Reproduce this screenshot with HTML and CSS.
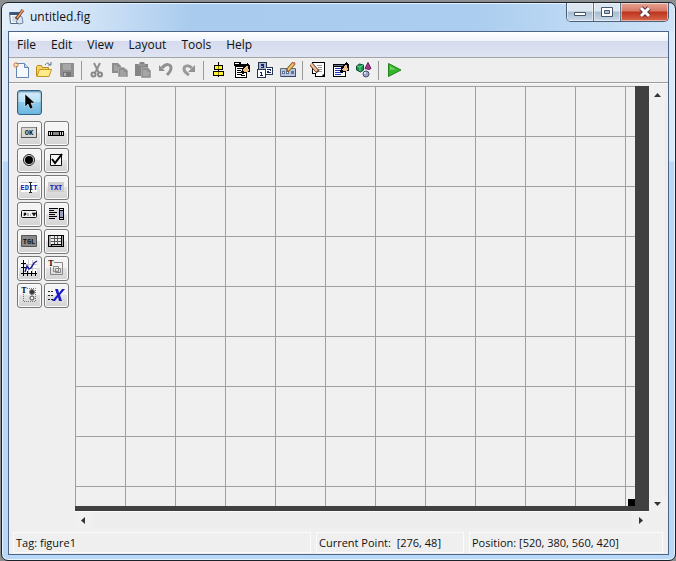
FILE: index.html
```html
<!DOCTYPE html>
<html lang="en">
<head>
<meta charset="utf-8">
<title>untitled.fig</title>
<link rel="stylesheet" href="styles.css">
</head>
<body>
<div class="window">
  <header class="titlebar">
    <svg class="app-icon" viewBox="0 0 16 16" aria-hidden="true">
      <path d="M.5 3.500h11v11H1.500z" fill="#f7fafc" stroke="#526b86"/>
      <path d="M1 3h10v3H1z" fill="#3d5878"/>
      <path d="M3 8h5M3 10h4M3 12h6" stroke="#b4c2d0"/>
      <path d="M11 7l2 1 1 6-4 1-3-2z" fill="#dce5ee" stroke="#70849a"/>
      <path d="M14 1L7 10" stroke="#643c2c" stroke-width="3"/>
      <path d="M14 1L8 9" stroke="#eda062" stroke-width="1.500"/>
    </svg>
    <h1 class="title">untitled.fig</h1>
    <div class="controls">
      <button class="control minimize" aria-label="Minimize"><svg viewBox="0 0 14 12"><path d="M1.500 6.500h11v3h-11z" fill="#fff" stroke="#47566d"/></svg></button>
      <button class="control maximize" aria-label="Maximize"><svg viewBox="0 0 14 12"><path d="M1.500 1.500h11v9h-11z" fill="#fff" stroke="#47566d"/><path d="M4.500 4.500h5v3h-5z" fill="#aebfd2" stroke="#47566d"/></svg></button>
      <button class="control close" aria-label="Close"><svg viewBox="0 0 14 12"><path d="M3 2l8 8M11 2l-8 8" stroke="#5d3440" stroke-width="5"/><path d="M3 2l8 8M11 2l-8 8" stroke="#fff" stroke-width="3"/></svg></button>
    </div>
  </header>

  <main class="client">
    <nav class="menubar" aria-label="Main menu">
      <button class="menu">File</button>
      <button class="menu">Edit</button>
      <button class="menu">View</button>
      <button class="menu">Layout</button>
      <button class="menu">Tools</button>
      <button class="menu">Help</button>
    </nav>

    <div class="toolbar" role="toolbar" aria-label="Standard">
      <button class="tool" aria-label="New"><svg viewBox="0 0 16 16"><path d="M3.500 1.500h8l4 4v10h-12z" fill="#f4f9ff" stroke="#6384b0"/><path d="M11.500 1.500v4h4" fill="#c6daf0" stroke="#6384b0"/><path d="M3 0v6M0 3h6M1 1l4 4M5 1L1 5" stroke="#d9743a"/><path d="M2 2h2v2H2z" fill="#ffe9a8"/></svg></button>
      <button class="tool" aria-label="Open"><svg viewBox="0 0 16 16"><path d="M.5 14V4.500l1-1h4l1 2h6V8" fill="#f4d266" stroke="#b98a1c"/><path d="M.8 14.500L3.500 7.500h12l-2.500 7z" fill="#ffeb8a" stroke="#c4941f"/><path d="M9 3c2-3 4-2 5 0" fill="none" stroke="#5c6f8a"/><path d="M12 3h3V0" fill="none" stroke="#5c6f8a"/></svg></button>
      <button class="tool" aria-label="Save" disabled><svg viewBox="0 0 16 16"><path d="M1 1h14v14H2l-1-1z" fill="#8f8f8f"/><path d="M4 2h8v6H4z" fill="#a8a8a8"/><path d="M4 10h8v5H4z" fill="#757575"/><path d="M5 11h2v3H5z" fill="#b5b5b5"/></svg></button>
      <span class="separator"></span>
      <button class="tool" aria-label="Cut" disabled><svg viewBox="0 0 16 16"><path d="M5 1l5 10M11 1L6 11" stroke="#909090" stroke-width="2"/><circle cx="4.500" cy="12.500" r="2" fill="none" stroke="#888" stroke-width="2"/><circle cx="11" cy="12.500" r="2" fill="none" stroke="#888" stroke-width="2"/></svg></button>
      <button class="tool" aria-label="Copy" disabled><svg viewBox="0 0 16 16"><path d="M0 1h6l3 3v7H0z" fill="#8d8d8d"/><path d="M2 4h3M2 6h4M2 8h4" stroke="#b8b8b8"/><path d="M6.500 5.500h5l4 3v6h-9z" fill="#8d8d8d" stroke="#aaa"/><path d="M8 9h4M8 11h6M8 13h6" stroke="#b8b8b8"/></svg></button>
      <button class="tool" aria-label="Paste" disabled><svg viewBox="0 0 16 16"><path d="M0 2h4l1-2h4l1 2h3v12H0z" fill="#858585"/><path d="M3 3h7" stroke="#aaa"/><path d="M6.500 5.500h6l3 3v7h-9z" fill="#929292" stroke="#a5a5a5"/><path d="M8 9h4M8 11h6M8 13h6" stroke="#b9b9b9"/></svg></button>
      <button class="tool" aria-label="Undo" disabled><svg viewBox="0 0 16 16"><path d="M4 6c4-5 9-4 9 0 0 3-2 5-4 7" fill="none" stroke="#919191" stroke-width="3"/><path d="M1 3v6h6z" fill="#919191"/></svg></button>
      <button class="tool" aria-label="Redo" disabled><svg viewBox="0 0 16 16"><path d="M11 6c-3-3-8-3-8 1 0 3 2 4 5 6" fill="none" stroke="#9a9a9a" stroke-width="3"/><path d="M14 3v7H7z" fill="#929292"/></svg></button>
      <span class="separator"></span>
      <button class="tool" aria-label="Align Objects"><svg class="crisp" viewBox="0 0 16 16"><path d="M7 0h1v15H7z"/><path d="M3 3h9v5H3zM2 9h11v5H2z"/><path d="M4 4h7v3H4zM3 10h9v3H3z" fill="#fff12a"/><path d="M7 4h1v3H7zM7 10h1v3H7z" fill="#8d8400"/></svg></button>
      <button class="tool" aria-label="Menu Editor"><svg class="crisp" viewBox="0 0 16 16"><path d="M0 0h7v2h6v14H1V4H0z"/><path d="M2 5h10v10H2z" fill="#fff"/><path d="M1 1h4v1H1z" fill="#fff"/><path d="M3 6h5v1H3zM3 8h4v1H3zM3 10h4v1H3zM3 12h5v1H3zM7 14h4v-1H7z"/><path d="M7 11l2-6 4-4 3 3v6h-3l-4 2z"/><path d="M9 8l4-5 1 2-4 5zM10 10l4-5 1 4-3 1z" fill="#e9bd84"/></svg></button>
      <button class="tool" aria-label="Tab Order Editor"><svg class="crisp" viewBox="0 0 16 16"><path d="M1 0h9v7H1zM0 7h9v9H0zM8 5h8v8H8z" fill="#26364c"/><path d="M2 1h7v6H2z" fill="#aab5d2"/><path d="M1 8h7v7H1zM9 6h6v6H9z" fill="#fff"/><path d="M4 2h3v4H4V5h2V4H4zM3 10h2v3h1v1H3v-1h1v-2H3zM10 7h4v2h-2v1h2v1h-4V9h3V8h-3z" fill="#18206f"/></svg></button>
      <button class="tool" aria-label="Toolbar Editor"><svg viewBox="0 0 16 16"><path d="M.5 6.500h15v8H.5z" fill="#b9c5dc" stroke="#5f6c83"/><path d="M1 14.500h15V7" fill="none" stroke="#33435d"/><path d="M2 9h3v3H2zM6 9h3v3H6zM11 9h3v3h-3z" fill="#61759a"/><path d="M3 10h1v1H3zM7 10h1v1H7z" fill="#fff"/><path d="M14 1L7 9" stroke="#805722" stroke-width="4"/><path d="M14 1L8 8" stroke="#f5c765" stroke-width="2"/><path d="M13 0l2 2" stroke="#d96858" stroke-width="2"/></svg></button>
      <span class="separator"></span>
      <button class="tool" aria-label="Editor"><svg viewBox="0 0 16 16"><path d="M2 0h13v15H5v-3H2z" fill="#000"/><path d="M3 1h11v11h-2v2H6v-3H3z" fill="#fff"/><path d="M7 3.500h5M8 5.500h4M8 7.500h4M7 9.500h5" stroke="#999"/><path d="M12 14v-2h2z" fill="#ccc"/><path d="M1 2l7 8" stroke="#5b3824" stroke-width="4"/><path d="M1 2l6 7" stroke="#f3c09a" stroke-width="2.500"/></svg></button>
      <button class="tool" aria-label="Property Inspector"><svg class="crisp" viewBox="0 0 16 16"><path d="M0 2h13v13H0z"/><path d="M1 5h11v9H1z" fill="#fff"/><path d="M1 3h11v1H1z" fill="#62769d"/><path d="M2 6h6v1H2zM2 8h5v1H2zM2 10h6v1H2zM2 12h6v1H2z" fill="#2433ae"/><path d="M7 10l2-6 4-4 3 3v6h-3l-4 2z"/><path d="M9 8l4-6 1 2-4 5zM10 9l4-5 1 4-3 1z" fill="#e9bd84"/></svg></button>
      <button class="tool" aria-label="Object Browser"><svg viewBox="0 0 16 16"><path d="M.5 4l3-2 4 1v5l-3 2-4-2z" fill="#199552" stroke="#124d31"/><path d="M1 4l3 1v4M4 5l3-2" fill="none" stroke="#72d494"/><path d="M12 .5l3 6-2 1-4-1z" fill="#a83391" stroke="#662258"/><circle cx="10" cy="12" r="3" fill="#9aa5c9" stroke="#49506d"/><circle cx="9" cy="11" r="1" fill="#eef"/></svg></button>
      <span class="separator"></span>
      <button class="tool" aria-label="Run Figure"><svg viewBox="0 0 16 16"><path d="M2.500 1.500L15 8 2.500 14.500z" fill="#35b52c" stroke="#24831f"/><path d="M4 4l6 3.500L4 8z" fill="#67d35c"/></svg></button>
    </div>

    <div class="workspace">
      <aside class="palette" aria-label="Component palette">
        <button class="component selected" aria-label="Select"><svg viewBox="0 0 18 18"><path d="M5 1v13l3-3 2 5 3-1-2-5h4z" fill="#000" stroke="#fff" stroke-opacity=".5"/></svg></button>
        <div class="components">
          <button class="component" aria-label="Push Button"><svg viewBox="0 0 18 18"><path d="M1.500 3.500h15v10h-15z" fill="#d8d8d0" stroke="#888"/><path d="M1 13.500h15.500V3" fill="none" stroke="#555"/><text class="glyph" x="9" y="11">OK</text></svg></button>
          <button class="component" aria-label="Slider"><svg class="crisp" viewBox="0 0 18 18"><path d="M1 7h16v5H1z"/><path d="M2 8h1v3H2zM4 8h1v3H4zM13 8h1v3h-1zM15 8h1v3h-1z" fill="#ddd"/><path d="M6 8h6v3H6z" fill="#888"/></svg></button>
          <button class="component" aria-label="Radio Button"><svg viewBox="0 0 18 18"><circle cx="9" cy="9" r="5.500" fill="#ddd" stroke="#222"/><circle cx="9" cy="9" r="4" fill="#000"/></svg></button>
          <button class="component" aria-label="Check Box"><svg viewBox="0 0 18 18"><path d="M3.500 3.500h11v11h-11z" fill="#f6f6f6" stroke="#111"/><path d="M5 8l3 4 7-9" fill="none" stroke="#000" stroke-width="2"/></svg></button>
          <button class="component" aria-label="Edit Text"><svg viewBox="0 0 18 18"><path d="M1 4h16v10H1z" fill="#fff"/><path d="M1 4.500h16" stroke="#ccc"/><text class="glyph blue" x="9" y="12">EDIT</text><path d="M10.500 5v9M9 4.500h3M9 14.500h3" stroke="#222"/></svg></button>
          <button class="component" aria-label="Static Text"><svg viewBox="0 0 18 18"><path d="M1 4h16v10H1z" fill="#cdcdd0"/><text class="glyph blue" x="9" y="12">TXT</text></svg></button>
          <button class="component" aria-label="Pop-up Menu"><svg viewBox="0 0 18 18"><rect x="1.500" y="5.500" width="15" height="7" rx="1" fill="#f4f4f4" stroke="#111"/><path d="M4 11V8h2v2M8 8v3M10 10h1M12 8h4l-2 3z" fill="#111" stroke="#111" stroke-width=".6"/></svg></button>
          <button class="component" aria-label="Listbox"><svg class="crisp" viewBox="0 0 18 18"><path d="M2 3h15v12H2z" fill="#dadada"/><path d="M2 3h9v1H2zM2 5h5v1H2zM2 7h8v1H2zM2 9h6v1H2zM2 11h8v1H2zM2 13h6v1H2zM12 3h5v12h-5z"/><path d="M13 4h3v1h-3zM13 13h3v1h-3z" fill="#ddd"/><path d="M13 6h3v6h-3z" fill="#9aa0bd"/></svg></button>
          <button class="component" aria-label="Toggle Button"><svg viewBox="0 0 18 18"><path d="M1.500 3.500h15v11h-15z" fill="#888" stroke="#555"/><text class="glyph" x="9" y="12">TGL</text></svg></button>
          <button class="component" aria-label="Table"><svg class="crisp" viewBox="0 0 18 18"><path d="M1 3h16v12H1z"/><path d="M2 4h2v10H2zM15 4h1v10h-1zM5 13h9v1H5z" fill="#aaa"/><path d="M4 4h10v8H4z" fill="#555"/><path d="M4 4h3v2H4zM8 4h2v2H8zM11 4h3v2h-3zM4 7h3v2H4zM8 7h2v2H8zM11 7h3v2h-3zM4 10h3v2H4zM8 10h2v2H8zM11 10h3v2h-3z" fill="#eee"/></svg></button>
          <button class="component" aria-label="Axes"><svg viewBox="0 0 18 18"><path d="M4 1h13v13H4z" fill="#fff"/><path d="M4 5.500h13M4 9.500h13M8.500 1v13M12.500 1v13" stroke="#ccc"/><path d="M3.500 1v16M1 14.500h16M1 4.500h5M1 8.500h5M7.500 12v5M11.500 12v5M15.500 12v5" stroke="#000"/><path d="M5 13l2-6 2 3 2-1 3-5 3-2" fill="none" stroke="#20209c" stroke-width="1.500"/></svg></button>
          <button class="component" aria-label="Panel"><svg viewBox="0 0 18 18"><path d="M7 3.500h8.500v12h-12V8" fill="none" stroke="#888"/><path d="M6.500 7.500h5v5h-5zM8.500 9.500h5v4h-5z" fill="none" stroke="#888"/><text class="serif" x="4" y="7">T</text></svg></button>
          <button class="component" aria-label="Button Group"><svg viewBox="0 0 18 18"><path d="M7 2.500h8.500v13h-12V8" fill="none" stroke="#777" stroke-dasharray="1"/><circle cx="12" cy="6" r="2.500" fill="#333" stroke="#777"/><circle cx="12" cy="12" r="2" fill="#f4f4f4" stroke="#444"/><text class="serif" x="4" y="7">T</text></svg></button>
          <button class="component" aria-label="ActiveX Control"><svg viewBox="0 0 18 18"><path d="M1 5.500h6M1 9.500h6M1 13.500h5" stroke="#222" stroke-dasharray="2 1"/><path d="M8 3h3l1 4 3-4h3l-5 6 2 6h-3l-1-4-3 4H5l5-6z" fill="#1a1ac9"/></svg></button>
        </div>
      </aside>

      <section class="editor" aria-label="Layout area">
        <div class="canvas"><div class="grid"><span class="handle"></span></div></div>
        <div class="scroll vertical">
          <button class="arrow" aria-label="Scroll up"><svg viewBox="0 0 9 9"><path d="M1 7l3.500-4L8 7z"/></svg></button>
          <button class="arrow" aria-label="Scroll down"><svg viewBox="0 0 9 9"><path d="M1 3h7L4.500 7z"/></svg></button>
        </div>
        <div class="scroll horizontal">
          <button class="arrow" aria-label="Scroll left"><svg viewBox="0 0 9 9"><path d="M6 1v7L2 4.500z"/></svg></button>
          <button class="arrow" aria-label="Scroll right"><svg viewBox="0 0 9 9"><path d="M3 1v7l4-3.500z"/></svg></button>
        </div>
      </section>
    </div>

    <footer class="statusbar">
      <div class="status">Tag: figure1</div>
      <div class="status">Current Point:&nbsp; [276, 48]</div>
      <div class="status">Position: [520, 380, 560, 420]</div>
    </footer>
  </main>
</div>
</body>
</html>
```

FILE: styles.css
```css
* { box-sizing: border-box; }

body {
  margin: 0;
  padding: 2px 0 0 1px;
  background: #8c8f92;
  color: #111;
  font: 12px/16px "Open Sans", "Noto Sans", sans-serif;
}

button {
  margin: 0;
  padding: 0;
  border: 0;
  background: none;
  color: inherit;
  font: inherit;
}

svg { display: block; fill: none; }
.crisp { shape-rendering: crispEdges; fill: #000; }

.window {
  display: flex;
  flex-direction: column;
  min-height: calc(100vh - 2px);
  padding: 0 6px 5px;
  border: 1px solid #1b222a;
  border-radius: 7px;
  background:
    linear-gradient(90deg, #e3eefa 0, #cfe2f6 90px, #a9cbee 190px, #abcdef 70%, #bcd8f4 85%, #cfe3f7) 0 0 / 100% 28px no-repeat,
    linear-gradient(#d9e9f9 158px, #b9d7f7 159px);
  box-shadow: inset 0 0 0 1px #e8f3fd;
}

.titlebar {
  display: flex;
  flex: none;
  height: 28px;
}

.app-icon { width: 16px; height: 16px; margin: 6px 5px 0 1px; }

.title {
  flex: 1;
  margin: 6px 0 0;
  font-size: 12px;
  font-weight: 400;
  line-height: 16px;
}

.controls {
  display: flex;
  height: 19px;
  border: 1px solid #4b5f78;
  border-top: 0;
  border-radius: 0 0 5px 5px;
  overflow: hidden;
}

.control {
  display: grid;
  place-items: center;
  width: 27px;
  border-right: 1px solid #5f7389;
  background: linear-gradient(#dce6f1 45%, #a9bccf 50%, #c8daeb);
  box-shadow: inset 0 0 0 1px #ffffff80;
}

.control svg { width: 14px; height: 12px; }

.close {
  width: 47px;
  border-right: 0;
  background: linear-gradient(#e6a594, #d67865 45%, #bd321c 50%, #d8684a);
}

.client {
  display: flex;
  flex: 1;
  flex-direction: column;
  border: 1px solid #4c6587;
  background: #efefef;
}

.menubar {
  display: flex;
  gap: 15px;
  height: 26px;
  padding: 0 8px;
  border-bottom: 1px solid #a5a5a8;
  background: linear-gradient(#fff, #f0f3fa 35%, #d5dbed 36%, #dfe4f3);
}

.toolbar {
  display: flex;
  align-items: center;
  height: 25px;
  border-bottom: 1px solid #9c9c9c;
}

.tool {
  display: grid;
  place-items: center;
  width: 23px;
  height: 22px;
}

.tool svg { width: 16px; height: 16px; margin-left: 1px; }

.separator {
  width: 1px;
  height: 19px;
  margin: 0 3px;
  background: #999;
}

.workspace {
  display: flex;
  flex: 1;
  border-top: 1px solid #fafafa;
}

.palette { flex: none; width: 66px; padding: 6px 0 0 8px; }

.components {
  display: grid;
  grid-template-columns: 25px 25px;
  gap: 2px;
  margin-top: 6px;
}

.component {
  display: grid;
  place-items: center;
  width: 25px;
  height: 25px;
  border: 1px solid #777;
  border-radius: 3px;
  background: linear-gradient(#f4f4f4 45%, #e3e3e3 50%, #d3d3d3);
  box-shadow: inset 0 0 0 1px #fafafa;
}

.component svg { width: 18px; height: 18px; margin: 0 1px 1px 0; }

.selected {
  border-color: #2c628b;
  background: linear-gradient(#d8eefa, #b4dff5 48%, #8dcbed 50%, #6db7df);
  box-shadow: inset 0 1px 2px #55839d;
}

.glyph {
  fill: #111;
  font: bold 7px "Liberation Mono", monospace;
  text-anchor: middle;
}

.blue { fill: #1717b5; }

.serif {
  fill: #000;
  font: bold 8px "Liberation Serif", serif;
  text-anchor: middle;
}

.editor {
  display: grid;
  flex: 1;
  grid-template-columns: 1fr 17px;
  grid-template-rows: 1fr 17px;
  padding: 2px 2px 0 0;
}

.canvas {
  display: flex;
  padding: 0 14px 5px 0;
  background: #404040;
}

.grid {
  display: flex;
  flex: 1;
  align-items: flex-end;
  justify-content: flex-end;
  background:
    linear-gradient(90deg, #a0a0a0 1px, transparent 1px) 0 0 / 50px 50px,
    linear-gradient(#a0a0a0 1px, transparent 1px) 0 0 / 50px 50px,
    #f0f0f0;
}

.handle { width: 7px; height: 7px; background: #000; }

.scroll {
  display: flex;
  justify-content: space-between;
  background: #f0f0f0;
}

.vertical { flex-direction: column; border-right: 1px solid #e8e8e8; }
.horizontal { border-top: 1px solid #fafafa; background: #ededed; }

.arrow {
  display: grid;
  place-items: center;
  width: 17px;
  height: 16px;
  background: #f0f0f0;
}

.arrow svg { width: 9px; height: 9px; fill: #333; }

.statusbar {
  display: grid;
  grid-template-columns: 298fr 148fr 194fr;
  gap: 5px;
  padding: 4px 5px 1px 4px;
  font-size: 11px;
}

.status {
  height: 21px;
  padding: 2px 2px 0;
  border: 1px solid #fbfbfb;
  white-space: nowrap;
}
```
